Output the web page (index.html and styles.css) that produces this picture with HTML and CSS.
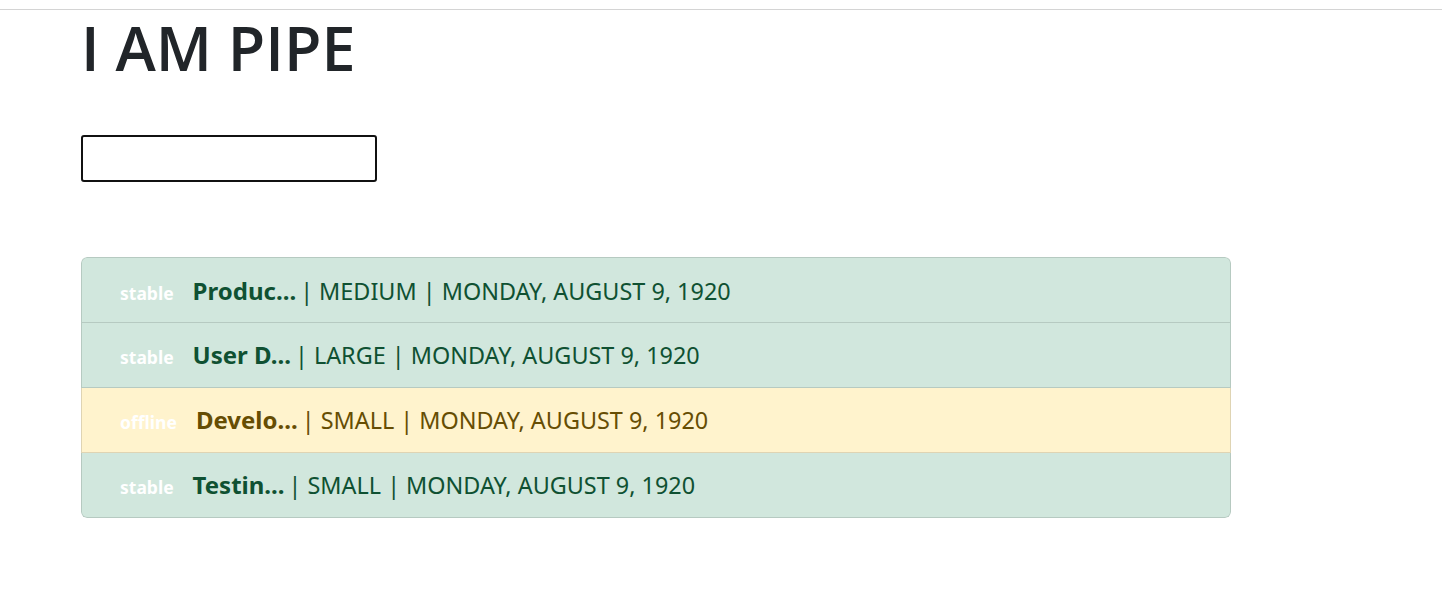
FILE: index.html
```html
<!DOCTYPE html>
<html>
<head>
<meta charset="utf-8">
<link rel="stylesheet" href="styles.css">
</head>
<body>
<div class="topline"></div>
<main class="page">
  <h1 class="title">I AM PIPE</h1>
  <input class="search" type="text">
  <ul class="list">
    <li class="item success"><span class="badge">stable</span><span class="name">Produc...</span><span class="meta">| MEDIUM | MONDAY, AUGUST 9, 1920</span></li>
    <li class="item success"><span class="badge">stable</span><span class="name">User D...</span><span class="meta">| LARGE | MONDAY, AUGUST 9, 1920</span></li>
    <li class="item warning"><span class="badge">offline</span><span class="name">Develo...</span><span class="meta">| SMALL | MONDAY, AUGUST 9, 1920</span></li>
    <li class="item success"><span class="badge">stable</span><span class="name">Testin...</span><span class="meta">| SMALL | MONDAY, AUGUST 9, 1920</span></li>
  </ul>
</main>
</body>
</html>
```

FILE: styles.css
```css
html, body {
  margin: 0;
  padding: 0;
  background: #fff;
  font-family: "Noto Sans", "Open Sans", sans-serif;
  color: #212529;
}
.topline {
  height: 9px;
  border-bottom: 1px solid #d4d4d4;
}
.page {
  padding-left: 81px;
  display: flex;
  flex-direction: column;
  align-items: flex-start;
}
.title {
  margin: 2px 0 0 0;
  font-family: "Open Sans", "Noto Sans", sans-serif;
  font-size: 61px;
  line-height: 72px;
  font-weight: 600;
  color: #212529;
}
.search {
  margin: 51px 0 0 0;
  width: 296px;
  height: 47px;
  box-sizing: border-box;
  border: 2px solid #111;
  border-radius: 3px;
  padding: 0 8px;
  font-size: 20px;
  background: #fff;
}
.list {
  list-style: none;
  margin: 75px 0 0 0;
  padding: 0;
  width: 1150px;
  border-radius: 6px;
  overflow: hidden;
}
.item {
  height: 65px;
  box-sizing: border-box;
  display: flex;
  align-items: baseline;
  padding: 14px 24px 0 38px;
  border: 1px solid rgba(0,0,0,.125);
  border-top-width: 0;
  font-size: 24px;
  line-height: 36px;
}
.item:first-child {
  height: 66px;
  padding-top: 15px;
  border-top-width: 1px;
  border-radius: 6px 6px 0 0;
}
.item:last-child {
  border-radius: 0 0 6px 6px;
}
.success {
  background: #d1e7dd;
  color: #0f5132;
}
.warning {
  background: #fff3cd;
  color: #664d03;
}
.badge {
  font-size: 17.5px;
  font-weight: 700;
  color: #fff;
  padding-right: 19px;
  line-height: 1;
}
.name {
  font-weight: 700;
  margin-right: 4px;
}
.meta {
  font-weight: 400;
  font-size: 23.4px;
}
```
